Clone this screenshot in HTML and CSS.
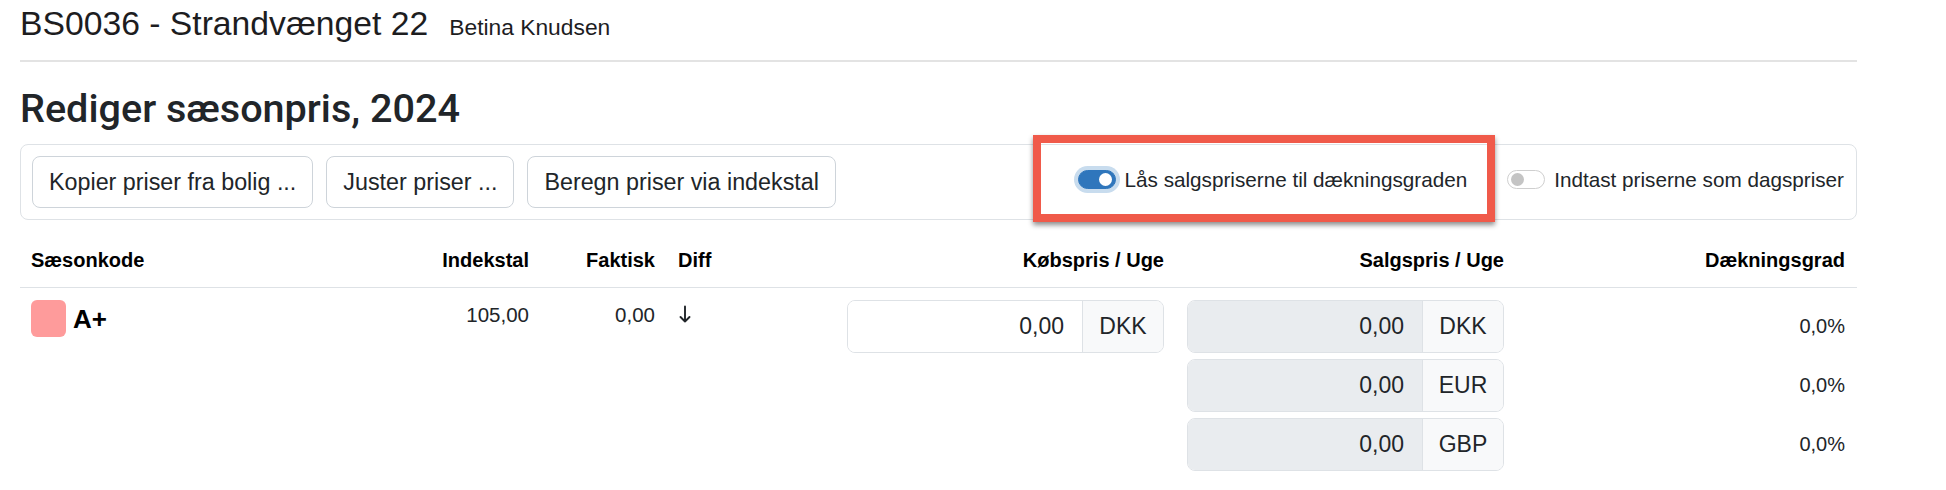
FILE: index.html
```html
<!DOCTYPE html>
<html lang="da">
<head>
  <meta charset="UTF-8">
  <meta name="viewport" content="width=device-width, initial-scale=1.0">
  <title>Rediger sæsonpris</title>
  <link rel="stylesheet" href="styles.css">
</head>
<body>
  <div class="page">
    <h3 class="property-title">BS0036 - Strandvænget 22 <small class="owner">Betina Knudsen</small></h3>
    <hr class="divider">

    <h2 class="page-title">Rediger sæsonpris, 2024</h2>

    <div class="toolbar">
      <div class="toolbar-actions">
        <button class="btn">Kopier priser fra bolig ...</button>
        <button class="btn">Juster priser ...</button>
        <button class="btn">Beregn priser via indekstal</button>
      </div>
      <div class="toolbar-switches">
        <label class="switch-item highlighted"><span class="switch on"></span>Lås salgspriserne til dækningsgraden</label>
        <label class="switch-item"><span class="switch"></span>Indtast priserne som dagspriser</label>
      </div>
    </div>

    <div class="price-table">
      <div class="th">Sæsonkode</div>
      <div class="th num">Indekstal</div>
      <div class="th num">Faktisk</div>
      <div class="th">Diff</div>
      <div class="th num">Købspris / Uge</div>
      <div class="th num">Salgspris / Uge</div>
      <div class="th num">Dækningsgrad</div>

      <div class="td">
        <div class="season"><span class="swatch"></span>A+</div>
      </div>
      <div class="td num">105,00</div>
      <div class="td num">0,00</div>
      <div class="td">
        <svg class="diff-arrow" width="12" height="18" viewBox="0 0 12 18" fill="none" stroke="#212529" stroke-width="1.9" stroke-linecap="round" stroke-linejoin="round">
          <path d="M6 1.5V16.5M1.5 12L6 16.5L10.5 12"/>
        </svg>
      </div>
      <div class="td stack">
        <div class="input-group">
          <span class="value">0,00</span><span class="currency">DKK</span>
        </div>
      </div>
      <div class="td stack">
        <div class="input-group readonly">
          <span class="value">0,00</span><span class="currency">DKK</span>
        </div>
        <div class="input-group readonly">
          <span class="value">0,00</span><span class="currency">EUR</span>
        </div>
        <div class="input-group readonly">
          <span class="value">0,00</span><span class="currency">GBP</span>
        </div>
      </div>
      <div class="td stack num">
        <div class="ratio">0,0%</div>
        <div class="ratio">0,0%</div>
        <div class="ratio">0,0%</div>
      </div>
    </div>
  </div>
</body>
</html>
```

FILE: styles.css
```css
body {
  margin: 0;
  font-family: "Liberation Sans", Arial, sans-serif;
  color: #212529;
  background-color: #fff;
}

.page {
  width: 1837px;
  padding: 3px 0 0 20px;
}

/* property heading */
.property-title {
  display: flex;
  align-items: baseline;
  gap: 21px;
  margin: 0;
  font-size: 33.7px;
  font-weight: 400;
  line-height: 1.2;
  color: #1d1d1f;
}

.owner {
  font-size: 22.8px;
}

.divider {
  margin: 17px 0 0;
  border: 0;
  border-top: 2px solid #e3e3e3;
}

.page-title {
  margin: 23px 0 11px;
  font-family: Roboto, "Liberation Sans", sans-serif;
  font-size: 39.6px;
  font-weight: 500;
  line-height: 48px;
}

/* toolbar with actions and switches */
.toolbar {
  display: flex;
  justify-content: space-between;
  align-items: center;
  padding: 11px 12px 11px 11px;
  border: 1px solid #dee2e6;
  border-radius: 8px;
}

.toolbar-actions {
  display: flex;
  gap: 13px;
}

.btn {
  height: 52px;
  padding: 0 16px;
  font-family: inherit;
  font-size: 23.3px;
  color: #212529;
  background-color: #fff;
  border: 1px solid #ced4da;
  border-radius: 8px;
  cursor: pointer;
}

.toolbar-switches {
  display: flex;
  align-items: center;
  gap: 40px;
  margin-top: -5px;
}

.switch-item {
  position: relative;
  display: flex;
  align-items: center;
  gap: 9px;
  font-size: 20.7px;
  line-height: 30px;
}

.switch {
  position: relative;
  width: 38px;
  height: 19px;
  box-sizing: border-box;
  border: 1px solid #cfcfcf;
  border-radius: 10px;
  background-color: #fff;
}

.switch::after {
  content: "";
  position: absolute;
  top: 2px;
  left: 3px;
  width: 13px;
  height: 13px;
  border-radius: 50%;
  background-color: #c4c4c4;
}

.switch.on {
  background-color: #2f76bc;
  border-color: #2f76bc;
  box-shadow: 0 0 0 4px #c8dcee;
}

.switch.on::after {
  left: auto;
  right: 3px;
  background-color: #fff;
}

/* red frame drawn over the first switch */
.highlighted::before {
  content: "";
  position: absolute;
  top: -30px;
  bottom: -27px;
  left: -45px;
  right: -28px;
  border: 8px solid #f05a4a;
  box-shadow: 0 3px 5px rgba(0, 0, 0, 0.45);
  pointer-events: none;
}

/* price table */
.price-table {
  display: grid;
  grid-template-columns: 400px 121px 126px 169px 340px 340px 341px;
  margin-top: 13px;
}

.th {
  padding: 12px 12px 12px 11px;
  font-size: 20px;
  font-weight: 700;
  line-height: 30px;
  color: #000;
  border-bottom: 1px solid #dee2e6;
}

.td {
  padding: 12px 12px 12px 11px;
  font-size: 20.5px;
  line-height: 30px;
}

.num {
  text-align: right;
}

.season {
  display: flex;
  align-items: center;
  gap: 7px;
  font-size: 26px;
  font-weight: 700;
  color: #000;
}

.swatch {
  width: 35px;
  height: 37px;
  border-radius: 6px;
  background-color: #fe9b9b;
}

.diff-arrow {
  display: block;
  margin: 5px 0 0 1px;
}

.stack {
  display: flex;
  flex-direction: column;
  gap: 6px;
}

.input-group {
  display: flex;
  height: 53px;
  box-sizing: border-box;
  border: 1px solid #dee2e6;
  border-radius: 8px;
  overflow: hidden;
  font-size: 23px;
  line-height: 51px;
}

.input-group .value {
  flex: 1;
  padding: 0 18px;
  text-align: right;
  background-color: #fff;
}

.input-group.readonly .value {
  background-color: #e9ecef;
}

.currency {
  width: 80px;
  text-align: center;
  background-color: #f8f9fa;
  border-left: 1px solid #dee2e6;
}

.ratio {
  height: 53px;
  line-height: 53px;
  font-size: 20px;
}
```
